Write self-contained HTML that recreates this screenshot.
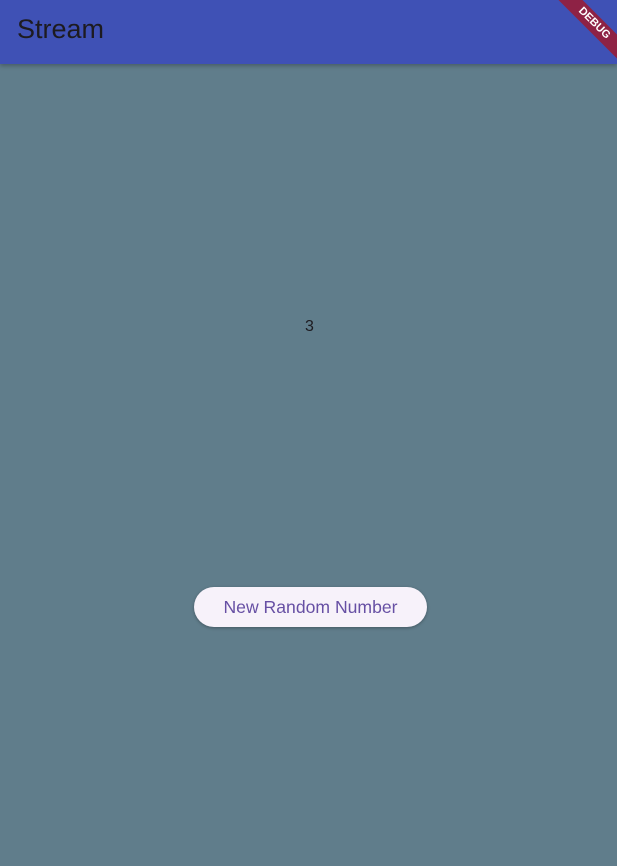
<!DOCTYPE html>
<html><head><meta charset="utf-8"><style>
html,body{margin:0;padding:0;width:617px;height:866px;overflow:hidden;background:#607d8b;font-family:"Liberation Sans",sans-serif;position:relative}
.bar{position:absolute;left:0;top:0;width:617px;height:64px;background:#3f51b5;box-shadow:0 2px 4px rgba(0,0,0,.25)}
.title{position:absolute;left:17px;top:14px;font-size:27px;color:#1d1b20}
.num{position:absolute;left:0;width:619px;top:318px;text-align:center;font-size:16px;color:#1d1b20}
.btn{position:absolute;left:194px;top:587px;width:233px;height:40px;border-radius:20px;background:#f7f2fa;box-shadow:0 1px 3px rgba(0,0,0,.3);color:#6750a4;font-size:17.6px;line-height:40px;text-align:center}
.banner{position:absolute;left:539px;top:15px;width:110px;height:17px;background:#8e2245;transform:rotate(45deg);transform-origin:center;color:#fff;font-weight:bold;font-size:11px;line-height:17px;text-align:center}
</style></head><body>
<div class="bar"><div class="title">Stream</div></div>
<div class="banner">DEBUG</div>
<div class="num">3</div>
<div class="btn">New Random Number</div>
</body></html>
